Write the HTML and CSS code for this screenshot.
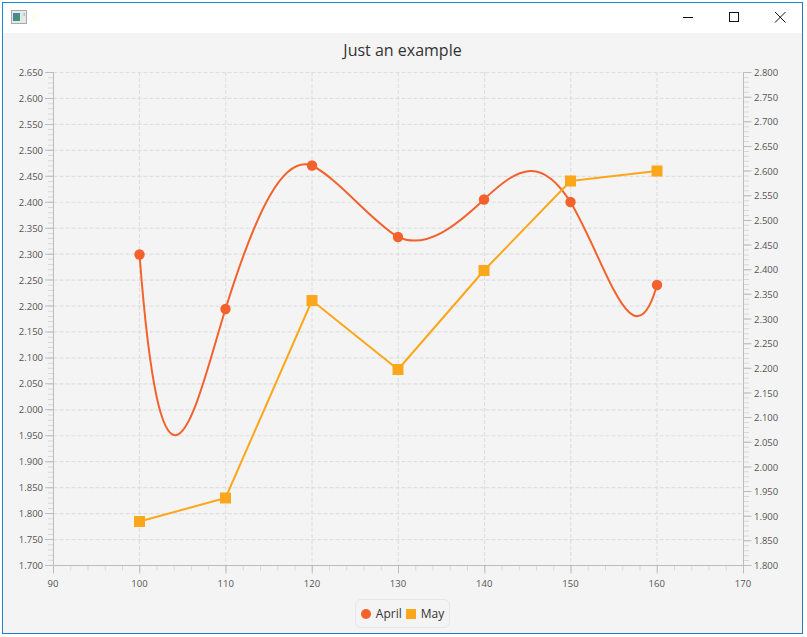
FILE: index.html
```html
<!DOCTYPE html>
<html lang="en">
<head>
<meta charset="utf-8">
<title>Just an example</title>
<link rel="stylesheet" href="styles.css">
</head>
<body>
<div class="window">
  <header class="titlebar">
    <svg class="app-icon" width="16" height="14" viewBox="0 0 16 14">
      <defs><linearGradient id="ic" x1="0" y1="0" x2="1" y2="1"><stop offset="0" stop-color="#4a7fa8"/><stop offset="1" stop-color="#3f9a6a"/></linearGradient></defs>
      <rect class="ic-frame" x="0.5" y="0.5" width="15" height="13"/>
      <rect x="2" y="3" width="7" height="8" fill="url(#ic)"/>
      <rect x="10" y="3" width="2" height="8" fill="#dfe6e6"/>
      <rect x="12.5" y="3" width="1.5" height="3" fill="#9fc9b8"/>
    </svg>
    <span class="caret"></span>
    <div class="controls">
      <svg class="ctl" width="46" height="30" viewBox="0 0 46 30"><path d="M18 14.5H28"/></svg>
      <svg class="ctl" width="46" height="30" viewBox="0 0 46 30"><rect x="18.5" y="9.5" width="9" height="9"/></svg>
      <svg class="ctl" width="46" height="30" viewBox="0 0 46 30"><path d="M18 9L28.5 19.5M28.5 9L18 19.5"/></svg>
    </div>
  </header>
  <main class="stage">
    <h1 class="chart-title">Just an example</h1>
    <svg class="chart" width="799" height="526" viewBox="3 67 799 526">
      <path class="grid" d="M53.5 72.5H743M53.5 98.45H743M53.5 124.39H743M53.5 150.34H743M53.5 176.29H743M53.5 202.24H743M53.5 228.18H743M53.5 254.13H743M53.5 280.08H743M53.5 306.03H743M53.5 331.97H743M53.5 357.92H743M53.5 383.87H743M53.5 409.82H743M53.5 435.76H743M53.5 461.71H743M53.5 487.66H743M53.5 513.61H743M53.5 539.55H743"/>
      <path class="grid" d="M139.5 72V565M225.75 72V565M312 72V565M398.25 72V565M484.5 72V565M570.75 72V565M657 72V565"/>

      <path class="minor minor-left" d="M50.5 72V566"/>
      <path class="minor minor-right" d="M746.5 72V566"/>
      <path class="minor minor-x" d="M53 568H744"/>
      <path class="major major-left" d="M49 72V566"/>
      <path class="major major-right" d="M747.5 72V566"/>
      <path class="major major-x" d="M53 569.5H744"/>
      <path class="axis" d="M53.5 72V565.5H743.5M743.5 72V565.5"/>

      <g class="tick tick-left">
        <text x="43" y="76">2.650</text><text x="43" y="102">2.600</text><text x="43" y="128">2.550</text><text x="43" y="154">2.500</text><text x="43" y="180">2.450</text><text x="43" y="206">2.400</text><text x="43" y="232">2.350</text><text x="43" y="258">2.300</text><text x="43" y="284">2.250</text><text x="43" y="310">2.200</text><text x="43" y="335">2.150</text><text x="43" y="361">2.100</text><text x="43" y="387">2.050</text><text x="43" y="413">2.000</text><text x="43" y="439">1.950</text><text x="43" y="465">1.900</text><text x="43" y="491">1.850</text><text x="43" y="517">1.800</text><text x="43" y="543">1.750</text><text x="43" y="569">1.700</text>
      </g>
      <g class="tick tick-right">
        <text x="754" y="76">2.800</text><text x="754" y="101">2.750</text><text x="754" y="125">2.700</text><text x="754" y="150">2.650</text><text x="754" y="175">2.600</text><text x="754" y="199">2.550</text><text x="754" y="224">2.500</text><text x="754" y="249">2.450</text><text x="754" y="273">2.400</text><text x="754" y="298">2.350</text><text x="754" y="323">2.300</text><text x="754" y="347">2.250</text><text x="754" y="372">2.200</text><text x="754" y="397">2.150</text><text x="754" y="421">2.100</text><text x="754" y="446">2.050</text><text x="754" y="471">2.000</text><text x="754" y="495">1.950</text><text x="754" y="520">1.900</text><text x="754" y="544">1.850</text><text x="754" y="569">1.800</text>
      </g>
      <g class="tick tick-x">
        <text x="53" y="587">90</text><text x="139.5" y="587">100</text><text x="225.7" y="587">110</text><text x="312" y="587">120</text><text x="398" y="587">130</text><text x="484.2" y="587">140</text><text x="570.5" y="587">150</text><text x="656.7" y="587">160</text><text x="743" y="587">170</text>
      </g>

      <path class="line-april" d="M139.5 254.5C163.5 566.5 197.5 398.6 225.5 309C257.5 206.6 284 155 312 165.5C340 180 370 220 398 237C426 250 456 226 484 199.5C520 165 542 157 570.5 202C606.5 263 633 369 657 285"/>
      <path class="line-may" d="M139.5 521.5L225.5 498L312 300.5L398 369.5L484 270.5L570.5 181L657 171"/>

      <g class="mark-april">
        <circle cx="139.5" cy="254.5" r="5.2"/><circle cx="225.5" cy="309" r="5.2"/><circle cx="312" cy="165.5" r="5.2"/><circle cx="398" cy="237" r="5.2"/><circle cx="484" cy="199.5" r="5.2"/><circle cx="570.5" cy="202" r="5.2"/><circle cx="657" cy="285" r="5.2"/>
      </g>
      <g class="mark-may">
        <rect x="134" y="516" width="11" height="11"/><rect x="220" y="492.5" width="11" height="11"/><rect x="306.5" y="295" width="11" height="11"/><rect x="392.5" y="364" width="11" height="11"/><rect x="478.5" y="265" width="11" height="11"/><rect x="565" y="175.5" width="11" height="11"/><rect x="651.5" y="165.5" width="11" height="11"/>
      </g>
    </svg>
    <div class="legend">
      <span class="swatch swatch-april"></span><span class="legend-label">April</span>
      <span class="swatch swatch-may"></span><span class="legend-label">May</span>
    </div>
  </main>
</div>
</body>
</html>
```

FILE: styles.css
```css
* { box-sizing: border-box; }
html, body { margin: 0; height: 100%; background: #fff; overflow: hidden; }
body { padding: 2px 4px 3px 2px; font-family: "Open Sans", "Noto Sans", sans-serif; }

.window {
  height: 632px;
  display: flex;
  flex-direction: column;
  border: 1px solid #1a86d6;
  border-bottom-color: #2a78b8;
  border-right-color: #2a78b8;
}

.titlebar { height: 30px; flex: none; display: flex; align-items: flex-start; background: #fff; }
.app-icon { margin: 7px 0 0 8px; }
.ic-frame { fill: #e8e8e8; stroke: #a9a9a9; }
.caret { width: 1px; height: 8px; margin: 10px 0 0 6px; background: #ffffc0; }
.controls { margin-left: auto; margin-right: -1px; display: flex; }
.ctl { display: block; }
.ctl path, .ctl rect { fill: none; stroke: #111; stroke-width: 1; }

.stage { flex: 1; display: flex; flex-direction: column; align-items: center; background: #f4f4f4; min-height: 0; }
.chart-title { margin: 0; height: 34px; flex: none; font-size: 16px; line-height: 34px; font-weight: 400; color: #333; }
.chart { display: block; flex: none; }

.grid { fill: none; stroke: #dedede; stroke-width: 1.2; stroke-dasharray: 4 2; }
.axis { fill: none; stroke: #bcbcbc; stroke-width: 1; }
.minor { fill: none; stroke: #d8d8d8; }
.minor-left { stroke-width: 5; stroke-dasharray: 1 4.19; }
.minor-right { stroke-width: 5; stroke-dasharray: 1 3.93; }
.minor-x { stroke-width: 5; stroke-dasharray: 1 16.25; }
.major { fill: none; stroke: #bcbcbc; stroke-width: 8; }
.major-left { stroke-dasharray: 1 24.947; }
.major-right { stroke-dasharray: 1 23.65; }
.major-x { stroke-dasharray: 1 85.25; }

.tick { font-size: 9.5px; fill: #555; }
.tick-left { text-anchor: end; }
.tick-right { text-anchor: start; }
.tick-x { text-anchor: middle; }

.line-april, .line-may { fill: none; stroke-width: 2; stroke-linejoin: round; }
.line-april { stroke: #f3622d; }
.line-may { stroke: #fba71b; }
.mark-april { fill: #f3622d; }
.mark-may { fill: #fba71b; }

.legend {
  margin-top: 6px;
  height: 29px;
  padding: 0 5px 0 5px;
  display: flex;
  align-items: center;
  flex: none;
  border: 1.5px solid #e6e6e6;
  border-radius: 6px;
  font-size: 12px;
  color: #333;
}
.swatch { flex: none; width: 10px; height: 10px; margin-right: 5px; }
.swatch-april { background: #f3622d; border-radius: 50%; }
.swatch-may { background: #fba71b; }
.legend-label { margin-right: 4px; }
.legend-label:last-child { margin-right: 0; }
```
